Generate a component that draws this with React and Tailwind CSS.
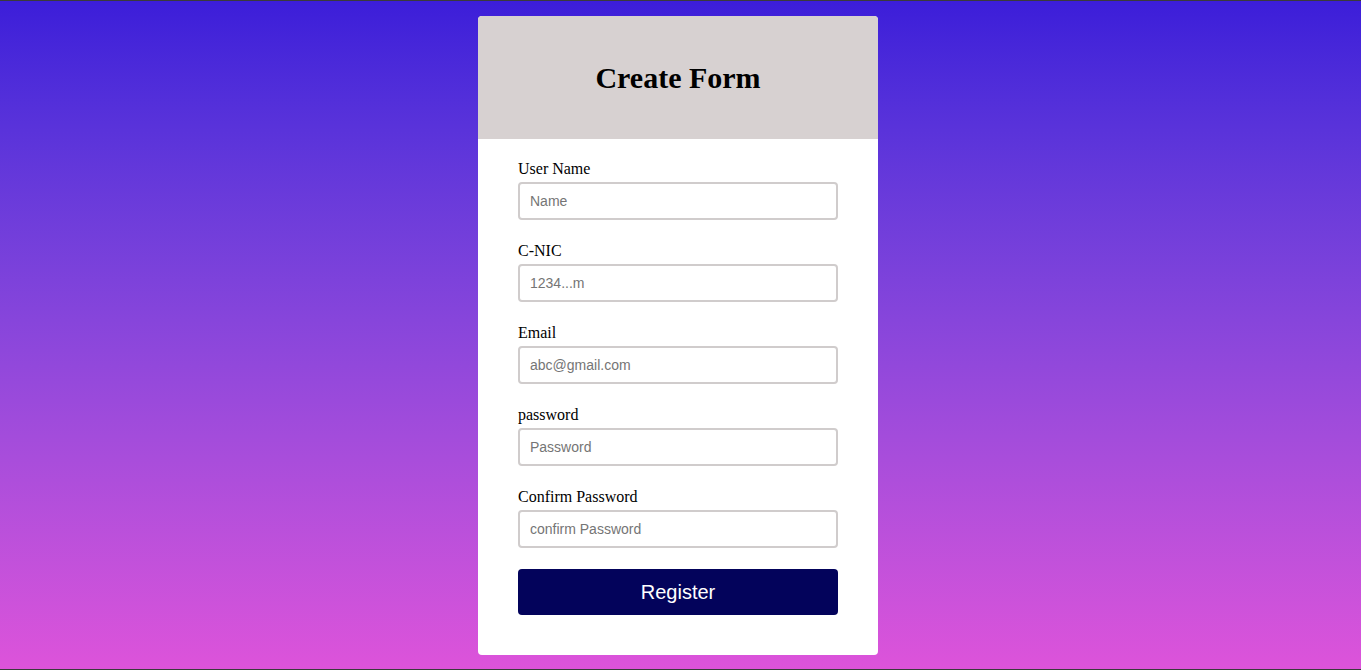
import React from 'react'

const FIELDS = [
  { label: 'User Name', placeholder: 'Name', type: 'text' },
  { label: 'C-NIC', placeholder: '1234...m', type: 'text' },
  { label: 'Email', placeholder: 'abc@gmail.com', type: 'email' },
  { label: 'password', placeholder: 'Password', type: 'password' },
  { label: 'Confirm Password', placeholder: 'confirm Password', type: 'password' },
]

const App = () => {
  return (
    <div className="h-[670px] w-full border-y border-[#3a3a3a] bg-gradient-to-b from-[#3c1dd9] to-[#dd53da] flex justify-center pt-[15px] pr-[5px]">
      <div className="w-[400px] h-[639px] bg-white rounded-[4px] overflow-hidden flex flex-col">
        <div className="h-[123px] bg-[#d7d1d1] flex items-center justify-center">
          <h1 className="font-['Liberation_Serif',serif] font-bold text-[30px] text-black leading-none">Create Form</h1>
        </div>
        <form className="px-[40px] pt-[20px] flex flex-col" onSubmit={e => e.preventDefault()}>
          {FIELDS.map(f => (
            <div key={f.label} className="flex flex-col mb-[21px]">
              <label className="font-['Liberation_Serif',serif] text-[16px] leading-[19px] text-black mb-[4px]">{f.label}</label>
              <input
                type={f.type}
                placeholder={f.placeholder}
                className="h-[38px] w-full border-2 border-[#d0cccc] rounded-[4px] px-[10px] font-['Liberation_Sans',sans-serif] text-[14px] text-black placeholder:text-[#757575] outline-none"
              />
            </div>
          ))}
          <button
            type="submit"
            className="h-[46px] w-full bg-[#03035b] rounded-[4px] text-white font-['Liberation_Sans',sans-serif] text-[20px]"
          >
            Register
          </button>
        </form>
      </div>
    </div>
  )
}

export default App
